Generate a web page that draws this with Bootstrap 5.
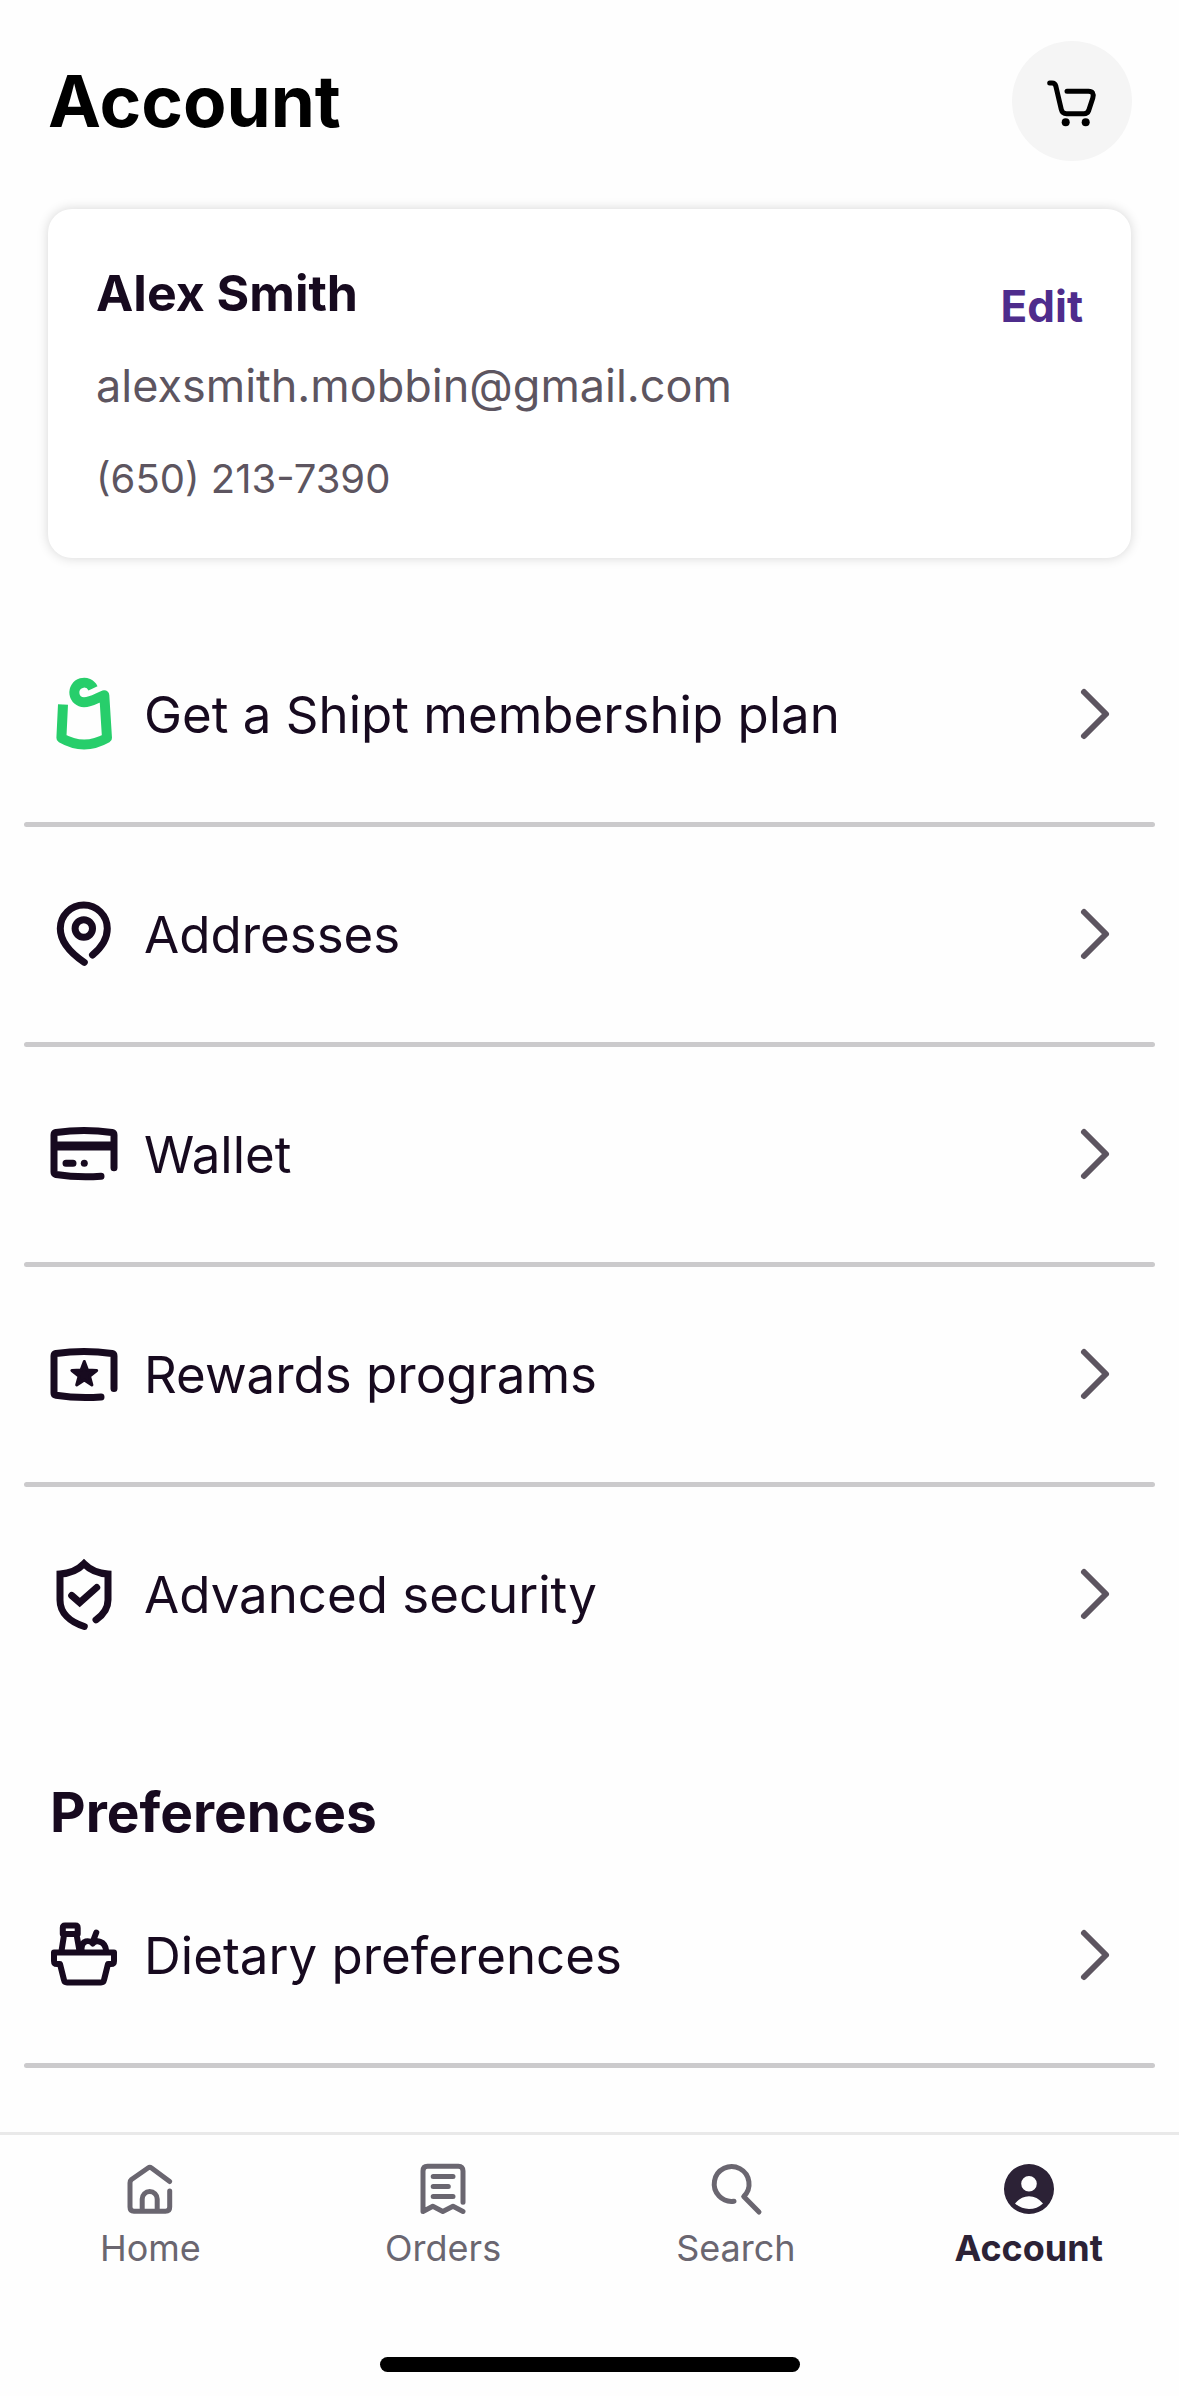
<!DOCTYPE html>
<html lang="en">
<head>
<meta charset="utf-8">
<meta name="viewport" content="width=device-width, initial-scale=1">
<title>Account</title>
<link rel="stylesheet" href="https://cdn.jsdelivr.net/npm/bootstrap@5.3.0/dist/css/bootstrap.min.css">
<style>
  :root {
    --ink: #170a1f;
    --muted: #5d5560;
    --tab: #6a6670;
    --rule: #cbcacc;
  }
  body { font-family: Inter, "Liberation Sans", sans-serif; color: var(--ink); background: #fefefe; }
  svg { display: block; flex: none; overflow: visible; fill: none; stroke: currentColor; stroke-linecap: round; stroke-linejoin: round; }

  .top-bar { padding: 41px 47px 48px 48px; }
  .page-title { font-size: 71px; line-height: 84px; font-weight: 700; color: #000; }
  .cart-btn { width: 120px; height: 120px; background: #f5f5f5; color: #000; border: 0; }
  .cart-btn svg { stroke-width: 5px; }

  .profile { margin: 0 48px 49px; padding: 48px 48px 43px; border-radius: 24px; background: #fff; box-shadow: 0 0 12px rgba(0, 0, 0, .16); }
  .profile-lines { gap: 21px; line-height: 72px; }
  .profile-name { font-size: 50px; line-height: 72px; font-weight: 700; }
  .profile-mail { font-size: 45px; color: var(--muted); }
  .profile-phone { font-size: 40px; color: var(--muted); }
  .edit-link { padding-top: 13px; font-size: 44px; line-height: 72px; font-weight: 700; color: #4e2c8c; }

  .menu { padding: 0 24px; }
  .menu-row { height: 215px; padding: 0 24px; gap: 24px; font-size: 51px; line-height: 64px; color: var(--ink); }
  .menu-row svg { width: 72px; height: 72px; stroke-width: 7px; }
  .menu-row .bag { color: #27ce6b; stroke-width: 10px; }
  .menu-row .chevron { color: var(--muted); stroke-width: 6px; }
  .rule { height: 5px; border-radius: 3px; background: var(--rule); }
  .section-title { padding: 77px 50px 3px; font-size: 55px; line-height: 66px; font-weight: 700; }

  .tab-bar { border-top: 3px solid #e9e9e9; background: #fefefe; padding: 26px 4px 24px; }
  .tab { gap: 7px; font-size: 36px; line-height: 48px; color: var(--tab); }
  .tab svg { width: 56px; height: 56px; stroke-width: 5px; }
  .tab.active { color: #2c2236; font-weight: 700; }
  .home-indicator { width: 420px; height: 15px; margin-top: 85px; border-radius: 8px; background: #000; }
</style>
<script src="https://cdn.jsdelivr.net/npm/bootstrap@5.3.0/dist/js/bootstrap.bundle.min.js"></script>
</head>
<body class="d-flex flex-column min-vh-100">

<svg class="d-none" aria-hidden="true">
  <symbol id="chevron" viewBox="0 0 72 72"><path d="M25 13 47 35 25 57"/></symbol>
</svg>

<header class="top-bar d-flex justify-content-between align-items-center">
  <h1 class="page-title mb-0">Account</h1>
  <button type="button" class="cart-btn rounded-circle p-0" aria-label="Cart">
    <svg width="120" height="120" viewBox="0 0 120 120">
      <path d="M37.700 42H40Q43 42 43.800 45L49.300 68.500Q50.300 72.700 54.500 72.700H72Q75.500 72.700 76.700 69.500L80.800 57Q82.500 50.300 76.500 50.300H55"/>
      <g fill="currentColor" stroke="none"><circle cx="53.700" cy="81.200" r="4"/><circle cx="73.700" cy="81.200" r="4"/></g>
    </svg>
  </button>
</header>

<main>
  <section class="profile d-flex justify-content-between align-items-start">
    <div class="profile-lines d-flex flex-column">
      <h2 class="profile-name mb-0">Alex Smith</h2>
      <div class="profile-mail">alexsmith.mobbin@gmail.com</div>
      <div class="profile-phone">(650) 213-7390</div>
    </div>
    <a href="#" class="edit-link text-decoration-none">Edit</a>
  </section>

  <nav class="menu" aria-label="Account">
    <a href="#" class="menu-row d-flex align-items-center text-decoration-none">
      <svg class="bag" viewBox="0 0 72 72"><path stroke-linecap="butt" d="M15 25.500 13.400 59Q36 72 59 59L56.300 16.200C49 19 43 23.300 36 23.300A9.800 9.800 0 1 1 45 9.300"/></svg>
      <span class="flex-grow-1">Get a Shipt membership plan</span>
      <svg class="chevron"><use href="#chevron"/></svg>
    </a>
    <div class="rule"></div>
    <a href="#" class="menu-row d-flex align-items-center text-decoration-none">
      <svg viewBox="0 0 72 72"><path d="M36.300 63.300C24 55 12.300 43 12.300 29.500a23.500 23.500 0 0 1 47 0C59.300 40 53 49 44.500 56"/><circle cx="35.800" cy="29.500" r="8.700"/></svg>
      <span class="flex-grow-1">Addresses</span>
      <svg class="chevron"><use href="#chevron"/></svg>
    </a>
    <div class="rule"></div>
    <a href="#" class="menu-row d-flex align-items-center text-decoration-none">
      <svg viewBox="0 0 72 72"><path d="M53 57.200Q30 59 8 55.500 6 55 6 53V16Q6 14 8 13.500 36 9.500 64 13.500 66 14 66 16V48.800M18 44.200h7"/><path stroke-width="9" stroke-linecap="butt" d="M6 27H66"/><circle cx="36.300" cy="44.200" r="3.500" fill="currentColor" stroke="none"/></svg>
      <span class="flex-grow-1">Wallet</span>
      <svg class="chevron"><use href="#chevron"/></svg>
    </a>
    <div class="rule"></div>
    <a href="#" class="menu-row d-flex align-items-center text-decoration-none">
      <svg viewBox="0 0 72 72"><path d="M53 58Q30 59.800 8 56.300 6 56 6 54V17Q6 15 8 14.500 36 10.500 64 14.500 66 15 66 17V49.500"/><path fill="currentColor" stroke-width="3" d="M36.300 22.500 39.500 31 48.700 31.500 41.500 37.200 43.900 46 36.300 41 28.700 46 31.100 37.200 23.900 31.500 33.100 31Z"/></svg>
      <span class="flex-grow-1">Rewards programs</span>
      <svg class="chevron"><use href="#chevron"/></svg>
    </a>
    <div class="rule"></div>
    <a href="#" class="menu-row d-flex align-items-center text-decoration-none">
      <svg viewBox="0 0 72 72"><path stroke-linejoin="miter" d="M36.300 67.500C22 63 12 54 12 41V15C22 14.500 30 11 36 4.800 42 11 50 14.500 60 15V41C60 49 55 56 48 60.800M23.700 36.500 31.700 43.500 48.700 28.500"/></svg>
      <span class="flex-grow-1">Advanced security</span>
      <svg class="chevron"><use href="#chevron"/></svg>
    </a>
  </nav>

  <h2 class="section-title mb-0">Preferences</h2>
  <nav class="menu" aria-label="Preferences">
    <a href="#" class="menu-row d-flex align-items-center text-decoration-none">
      <svg viewBox="0 0 72 72"><path stroke-width="6" d="M6 32.500H66V41Q66 44 63 44H60L56 60Q55.500 62.500 53 62.500H19Q16.500 62.500 16 60L12 44H9Q6 44 6 41ZM17 5.500H27.500Q29.700 5.500 29.700 8V14H14.800V8Q14.800 5.500 17 5.500ZM15.700 17 13.500 31M29 17 31.500 31M33.500 31C33 19 42 20 44.700 23.500 48 20 57 20 58.300 31M44.700 22 48.300 12.500"/></svg>
      <span class="flex-grow-1">Dietary preferences</span>
      <svg class="chevron"><use href="#chevron"/></svg>
    </a>
    <div class="rule"></div>
  </nav>
</main>

<footer class="tab-bar mt-auto sticky-bottom">
  <nav class="row g-0" aria-label="Main">
    <a href="#" class="tab col d-flex flex-column align-items-center text-decoration-none">
      <svg viewBox="0 0 56 56"><path d="M47.700 20.500 29.500 7Q27.800 5.800 26 7L9.500 18.500Q8 19.700 8 22V46Q8 50.300 12 50.300H43.500Q47.700 50.300 47.700 46V30M20.200 50V38A7.500 7.500 0 0 1 35.200 38V50"/></svg>
      <span>Home</span>
    </a>
    <a href="#" class="tab col d-flex flex-column align-items-center text-decoration-none">
      <svg viewBox="0 0 56 56"><path d="M48 41.300V10Q48 5.300 43.500 5.300H12.500Q8 5.300 8 10V50.500L17.800 45.300 27.800 50.500 38 45.300 48 50.500M18.200 15.500H38M18.200 25.500H33.300M18.200 35.500H38"/></svg>
      <span>Orders</span>
    </a>
    <a href="#" class="tab col d-flex flex-column align-items-center text-decoration-none">
      <svg viewBox="0 0 56 56"><path d="M26 40.200A17.400 17.400 0 1 1 35.700 35.500L51 51"/></svg>
      <span>Search</span>
    </a>
    <a href="#" class="tab active col d-flex flex-column align-items-center text-decoration-none" aria-current="page">
      <svg viewBox="0 0 56 56"><path fill="currentColor" fill-rule="evenodd" stroke="none" d="M28 3a25 25 0 1 1 0 50a25 25 0 1 1 0-50ZM28 15a7.800 7.800 0 1 0 0 15.600a7.800 7.800 0 1 0 0-15.600ZM14 42.500Q20 35.200 28 35.200T42 42.500Q36 48 28 48T14 42.500Z"/></svg>
      <span>Account</span>
    </a>
  </nav>
  <div class="home-indicator mx-auto"></div>
</footer>

</body>
</html>
